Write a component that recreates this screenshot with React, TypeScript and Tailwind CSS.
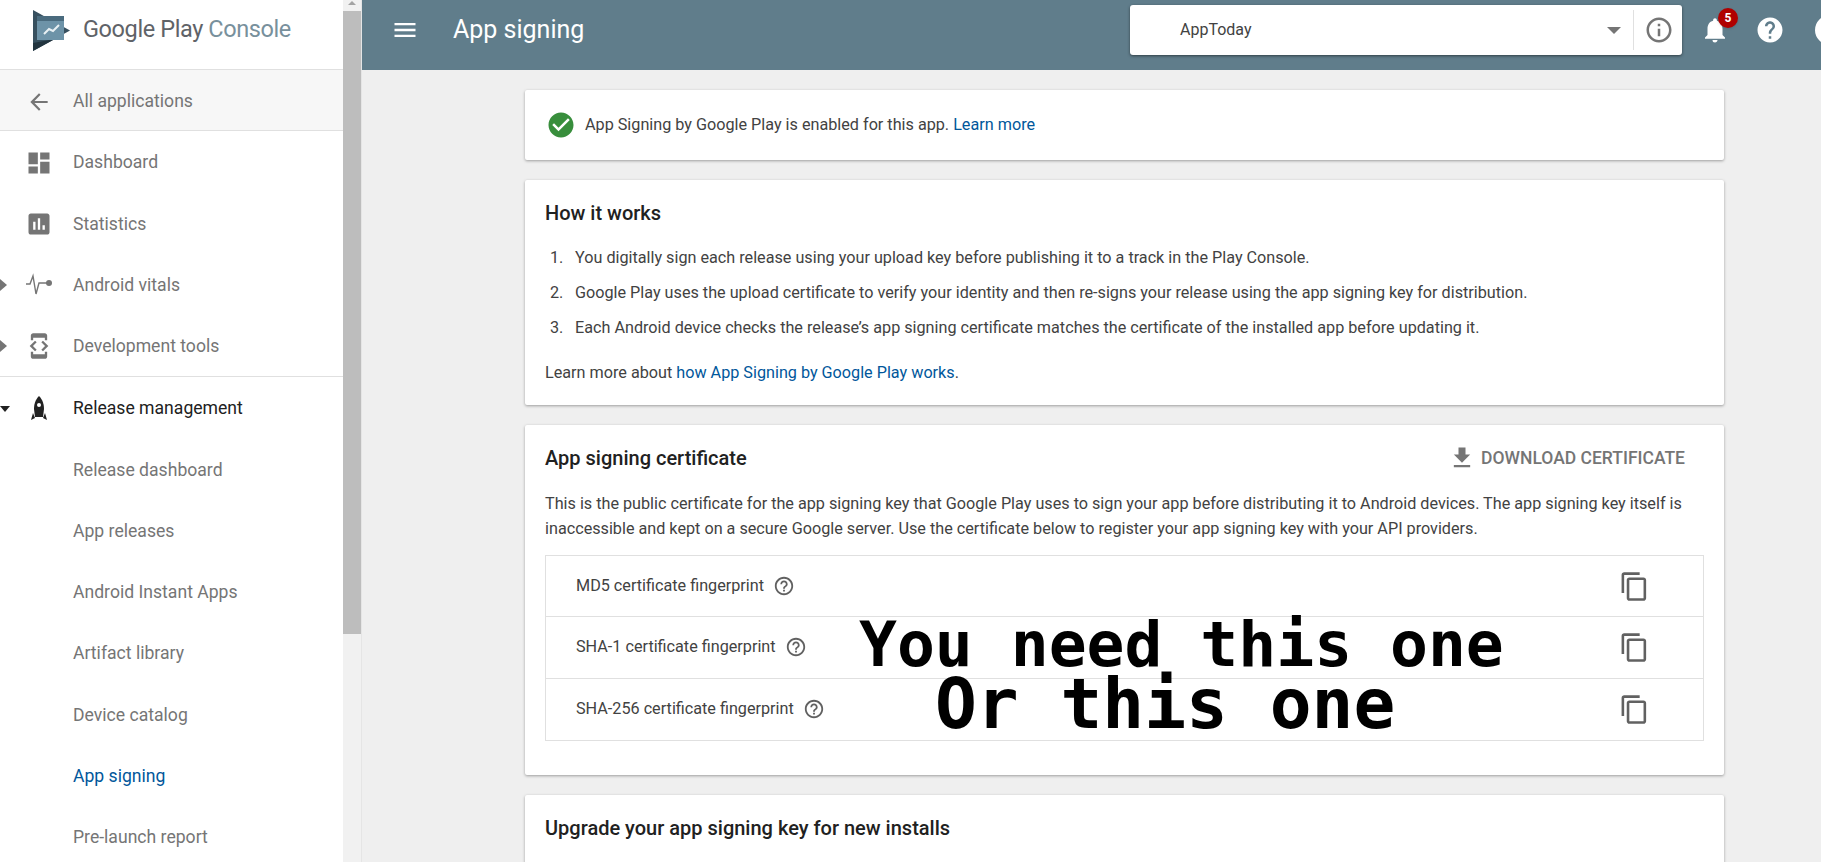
import {
  MdArrowBack,
  MdAssessment,
  MdCheckCircle,
  MdContentCopy,
  MdDashboard,
  MdDeveloperMode,
  MdFileDownload,
  MdHelp,
  MdHelpOutline,
  MdInfoOutline,
  MdMenu,
  MdNotifications,
} from "react-icons/md"

function PlayLogo() {
  return (
    <svg width="38" height="41" viewBox="0 0 38 41" className="shrink-0">
      <path d="M0 0 L37 20.5 L0 41 Z" fill="#37505f" />
      <path d="M0 41 L0 33 L22 29 Z" fill="#22343f" />
      <path d="M4 6 H31 V30 H4 Z" fill="#6d93a8" />
      <path d="M4 6 H31 V11 H4 Z" fill="#4a6b7e" />
      <path d="M11 24 L16 19 L20 21 L26 15" fill="none" stroke="#e8f0f4" strokeWidth="2" />
    </svg>
  )
}

function VitalsIcon() {
  return (
    <svg width="28" height="24" viewBox="0 0 28 24" fill="none" stroke="#757575" strokeWidth="1.4">
      <path d="M1 11 H5 L8 3 L11 21 L14 10 H22" />
      <circle cx="24" cy="10" r="3" fill="#757575" stroke="none" />
    </svg>
  )
}

function RocketIcon() {
  return (
    <svg width="18" height="26" viewBox="0 0 18 26">
      <path d="M9 0 C13 4 14 9 14 13 L13 21 H5 L4 13 C4 9 5 4 9 0 Z" fill="#212121" />
      <circle cx="9" cy="9" r="2" fill="#fff" />
      <path d="M3 17 L1 24 L5 22 Z M15 17 L17 24 L13 22 Z" fill="#212121" />
    </svg>
  )
}

const subItems = ["Release dashboard", "App releases", "Android Instant Apps", "Artifact library", "Device catalog"]

function Card({ children, className }: { children: React.ReactNode; className: string }) {
  return <section className={`shrink-0 rounded-[2px] bg-white shadow-[0_1px_3px_rgba(0,0,0,0.35)] ${className}`}>{children}</section>
}

function FingerprintRow({ label, last }: { label: string; last?: boolean }) {
  return (
    <div className={`flex h-[61.3px] items-center pl-[30px] pr-[53px] ${last ? "" : "border-b border-[#e0e0e0]"}`}>
      <span className="text-[16.2px] text-[#424242]">{label}</span>
      <MdHelpOutline className="ml-[9px] text-[#616161]" size={22} />
      <MdContentCopy className="ml-auto text-[#616161]" size={31} />
    </div>
  )
}

function NavRow({ icon, label, arrow, className = "text-[#757575]" }: { icon?: React.ReactNode; label: string; arrow?: "right" | "down"; className?: string }) {
  return (
    <div className={`relative flex h-[61.25px] shrink-0 items-center pt-[2px] text-[17.6px] ${className}`}>
      {arrow === "right" && <span className="absolute left-0 h-0 w-0 border-y-[6px] border-l-[7px] border-y-transparent border-l-[#757575]" />}
      {arrow === "down" && <span className="absolute left-0 h-0 w-0 border-x-[5px] border-t-[6px] border-x-transparent border-t-[#212121]" />}
      <span className="flex w-[73px] shrink-0 justify-center pl-[4px]">{icon}</span>
      <span>{label}</span>
    </div>
  )
}

export default function App() {
  return (
    <div className="flex h-screen overflow-hidden bg-[#efefef] font-['Roboto',sans-serif]">
      {/* Sidebar */}
      <aside className="flex w-[343px] shrink-0 flex-col overflow-hidden bg-white">
        <div className="flex h-[70px] shrink-0 items-center gap-[12px] border-b border-[#e0e0e0] pb-[9px] pl-[33px]">
          <PlayLogo />
          <span className="text-[23.5px] tracking-[-0.4px] text-[#5f6368]">
            Google Play <span className="text-[#78909c]">Console</span>
          </span>
        </div>
        <div className="flex h-[61px] shrink-0 items-center border-b border-[#e0e0e0] bg-[#f7f7f7] pt-[3px] text-[17.6px] text-[#757575]">
          <span className="flex w-[73px] justify-center pl-[4px]">
            <MdArrowBack size={26} />
          </span>
          All applications
        </div>
        <NavRow icon={<MdDashboard size={28} />} label="Dashboard" />
        <NavRow icon={<MdAssessment size={28} />} label="Statistics" />
        <NavRow icon={<VitalsIcon />} label="Android vitals" arrow="right" />
        <div className="shrink-0 border-b border-[#e0e0e0]">
          <NavRow icon={<MdDeveloperMode size={28} />} label="Development tools" arrow="right" />
        </div>
        <NavRow icon={<RocketIcon />} label="Release management" arrow="down" className="text-[#212121]" />
        {subItems.map((item) => (
          <NavRow key={item} label={item} />
        ))}
        <NavRow label="App signing" className="text-[#01579b]" />
        <NavRow label="Pre-launch report" />
      </aside>

      {/* Sidebar scrollbar */}
      <div className="flex w-[18px] shrink-0 flex-col items-center bg-[#f1f1f1]">
        <span className="mt-[1px] h-0 w-0 border-x-[4px] border-b-[4px] border-x-transparent border-b-[#a3a3a3]" />
        <div className="mt-[6px] h-[623px] w-full bg-[#bdbdbd]" />
      </div>

      <main className="min-w-0 flex-1 overflow-hidden border-l border-[#e5e5e5]">
        <header className="flex h-[70px] items-center bg-[#607d8b] pb-[10px] text-white">
          <MdMenu className="ml-[29px] shrink-0" size={28} />
          <h1 className="ml-[34px] w-[677px] shrink-0 text-[25px]">App signing</h1>
          <div className="flex h-[50px] w-[552px] shrink-0 items-center rounded-[3px] bg-white pl-[50px] pr-[8px] text-[#424242] shadow-[0_1px_3px_rgba(0,0,0,0.5)]">
            <span className="text-[16px]">AppToday</span>
            <span className="ml-auto h-0 w-0 border-x-[7px] border-t-[7px] border-x-transparent border-t-[#757575]" />
            <span className="ml-[12px] h-[40px] border-l border-[#e0e0e0]" />
            <MdInfoOutline className="ml-[10px] text-[#757575]" size={30} />
          </div>
          <div className="relative ml-[18px] shrink-0">
            <MdNotifications size={30} />
            <span className="absolute left-[18px] top-[-7px] flex h-[20px] w-[20px] items-center justify-center rounded-full bg-[#b00000] text-[12px] font-bold shadow">5</span>
          </div>
          <MdHelp className="ml-[25px] shrink-0" size={30} />
          <span className="ml-[30px] h-[30px] w-[30px] shrink-0 rounded-full bg-white" />
        </header>

        <div className="ml-[163px] flex w-[1199px] flex-col gap-5 pt-5">
          <Card className="flex h-[70px] items-center pl-[21px] text-[16.2px] text-[#424242]">
            <MdCheckCircle className="mr-[9px] text-[#388e3c]" size={30} />
            App Signing by Google Play is enabled for this app.&nbsp;<a className="text-[#01579b]">Learn more</a>
          </Card>

          <Card className="h-[225px] px-5 pt-[22px] text-[16.2px] text-[#424242]">
            <h2 className="text-[20px] font-medium leading-[22px] text-[#212121]">How it works</h2>
            <ol className="mt-[24px] flex flex-col gap-[15px] leading-[20px]">
              <li className="flex"><span className="w-[30px] pl-[5px]">1.</span>You digitally sign each release using your upload key before publishing it to a track in the Play Console.</li>
              <li className="flex"><span className="w-[30px] pl-[5px]">2.</span>Google Play uses the upload certificate to verify your identity and then re-signs your release using the app signing key for distribution.</li>
              <li className="flex"><span className="w-[30px] pl-[5px]">3.</span>Each Android device checks the release’s app signing certificate matches the certificate of the installed app before updating it.</li>
            </ol>
            <p className="mt-[25px] leading-[20px]">Learn more about <a className="text-[#01579b]">how App Signing by Google Play works</a>.</p>
          </Card>

          <Card className="relative h-[350px] px-5 pt-[18px] text-[16.2px] text-[#424242]">
            <div className="flex items-center justify-between pr-[19px]">
              <h2 className="text-[20px] font-medium text-[#212121]">App signing certificate</h2>
              <span className="flex items-center gap-[5px] text-[17.5px] font-medium text-[#757575]">
                <MdFileDownload size={28} />
                DOWNLOAD CERTIFICATE
              </span>
            </div>
            <p className="mt-[19px] leading-[24.5px]">
              This is the public certificate for the app signing key that Google Play uses to sign your app before distributing it to Android devices. The app signing key itself is inaccessible and kept on a secure Google server. Use the certificate below to register your app signing key with your API providers.
            </p>
            <div className="mt-[14px] border border-[#e0e0e0]">
              <FingerprintRow label="MD5 certificate fingerprint" />
              <FingerprintRow label="SHA-1 certificate fingerprint" />
              <FingerprintRow label="SHA-256 certificate fingerprint" last />
            </div>
            <div className="absolute left-[334px] top-[189px] whitespace-nowrap font-['DejaVu_Sans_Mono',monospace] text-[63px] font-bold leading-[61px] text-black">
              You need this one
            </div>
            <div className="absolute left-[410px] top-[244px] whitespace-nowrap font-['DejaVu_Sans_Mono',monospace] text-[69.5px] font-bold leading-[69px] text-black">
              Or this one
            </div>
          </Card>

          <Card className="h-[200px] px-5 pt-[22px]">
            <h2 className="text-[20px] font-medium leading-[22px] text-[#212121]">Upgrade your app signing key for new installs</h2>
          </Card>
        </div>
      </main>
    </div>
  )
}
